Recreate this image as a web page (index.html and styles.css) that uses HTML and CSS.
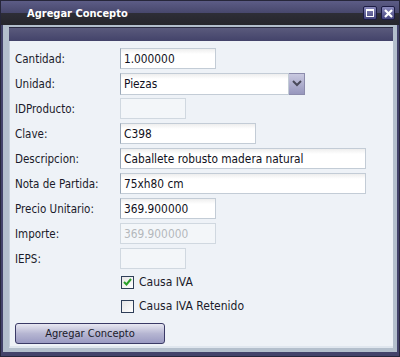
FILE: index.html
```html
<!DOCTYPE html>
<html lang="es">
<head>
    <meta charset="UTF-8">
    <title>Agregar Concepto</title>
    <link rel="stylesheet" href="styles.css">
</head>
<body>
    <div class="window">
        <div class="titlebar">
            <span class="title">Agregar Concepto</span>
            <div class="controls">
                <span class="ctl">
                    <svg width="8" height="8" viewBox="0 0 8 8"><rect x="0.5" y="0.5" width="7" height="7" fill="none" stroke="#fff"/><rect x="0" y="0" width="8" height="2" fill="#fff"/></svg>
                </span>
                <span class="ctl">
                    <svg width="9" height="9" viewBox="0 0 9 9"><path d="M1 1 L8 8 M8 1 L1 8" stroke="#fff" stroke-width="2.2"/></svg>
                </span>
            </div>
        </div>

        <div class="frame">
            <div class="band"></div>
            <div class="content">
                <!-- form rows -->
                <div class="form">
                    <label>Cantidad:</label>
                    <div><input class="w96" type="text" value="1.000000"></div>

                    <label>Unidad:</label>
                    <div class="combo">
                        <input class="w169" type="text" value="Piezas">
                        <span class="drop">
                            <svg width="10" height="7" viewBox="0 0 10 7"><path d="M1 1 L5 5 L9 1" fill="none" stroke="#4a4a5a" stroke-width="2"/></svg>
                        </span>
                    </div>

                    <label>IDProducto:</label>
                    <div><input class="w66 off" type="text" value=""></div>

                    <label>Clave:</label>
                    <div><input class="w136" type="text" value="C398"></div>

                    <label>Descripcion:</label>
                    <div><input class="w246" type="text" value="Caballete robusto madera natural"></div>

                    <label>Nota de Partida:</label>
                    <div><input class="w246" type="text" value="75xh80 cm"></div>

                    <label>Precio Unitario:</label>
                    <div><input class="w96" type="text" value="369.900000"></div>

                    <label>Importe:</label>
                    <div><input class="w96 off" type="text" value="369.900000"></div>

                    <label>IEPS:</label>
                    <div><input class="w66 off" type="text" value=""></div>
                </div>

                <div class="checks">
                    <div class="check"><span class="box">
                        <svg width="9" height="8" viewBox="0 0 9 8"><path d="M1 4 L3.5 6.5 L8 1" fill="none" stroke="#2aa02a" stroke-width="2"/></svg>
                    </span>Causa IVA</div>
                    <div class="check"><span class="box"></span>Causa IVA Retenido</div>
                </div>

                <button class="btn">Agregar Concepto</button>
            </div>
        </div>
    </div>
</body>
</html>
```

FILE: styles.css
```css
body {
    margin: 0;
    padding: 0;
    background-color: #ffffff;
    font-family: "DejaVu Sans Condensed", "DejaVu Sans", sans-serif;
    font-size: 11.5px;
    color: #1a1a2a;
}
.window {
    width: 400px;
    height: 357px;
    box-sizing: border-box;
    border: 1px solid #26263a;
    background-color: #43436a;
    padding: 0 2px 3px 2px;
}
.titlebar {
    height: 24px;
    margin: 0 -2px;
    padding: 0 4px 0 26px;
    display: flex;
    align-items: center;
    justify-content: space-between;
    background: linear-gradient(to bottom, #5c5c86 0%, #47476c 50%, #2d2d36 52%, #26262c 100%);
}
.title {
    color: #ffffff;
    font-weight: bold;
    font-size: 11px;
    margin-top: 1px;
}
.controls {
    display: flex;
    gap: 4px;
}
.ctl {
    width: 14px;
    height: 14px;
    box-sizing: border-box;
    border: 1px solid #1c1c44;
    border-radius: 2px;
    background: linear-gradient(to bottom, #8a8abc, #44447e);
    display: flex;
    align-items: center;
    justify-content: center;
}
.frame {
    height: 327px;
    box-sizing: border-box;
    background-color: #b3bfcc;
    padding: 2px 4px 4px 6px;
    display: flex;
    flex-direction: column;
}
.band {
    height: 13px;
    border-top: 1px solid #2c2c44;
    background: linear-gradient(to bottom, #5a5a7c, #43436a);
}
.content {
    flex: 1;
    background-color: #eef2f7;
    border-left: 1px solid #c6d0dc;
    border-bottom: 2px solid #dfe6ee;
    padding: 5px 0 0 5px;
}
.form {
    display: grid;
    grid-template-columns: 105px auto;
    grid-auto-rows: 25px;
    align-items: center;
}
.form label {
    font-size: 11.5px;
    color: #1a1a2a;
}
input[type="text"] {
    height: 21px;
    box-sizing: border-box;
    border: 1px solid #c3ccd6;
    border-left-color: #9aa8b8;
    background: linear-gradient(to bottom, #eeeeee 0px, #ffffff 5px);
    font-family: "DejaVu Sans Condensed", "DejaVu Sans", sans-serif;
    font-size: 11.8px;
    color: #101020;
    padding: 1px 3px 0 3px;
    margin: 0;
    display: block;
}
input.off {
    background: #f3f6f9;
    border-color: #d0d8e0;
    color: #b4b8bc;
}
.w66 { width: 66px; }
.w96 { width: 96px; }
.w136 { width: 136px; }
.w169 { width: 169px; height: 22px !important; }
.w246 { width: 246px; }
.combo {
    display: flex;
}
.drop {
    width: 16px;
    height: 22px;
    box-sizing: border-box;
    border: 1px solid #8c8cac;
    border-left: none;
    background: linear-gradient(to bottom, #c9c9e0, #9797bd);
    display: flex;
    align-items: center;
    justify-content: center;
}
.checks {
    margin-left: 106px;
    margin-top: -1px;
}
.check {
    height: 24px;
    display: flex;
    align-items: center;
    font-size: 12px;
}
.box {
    width: 13px;
    height: 13px;
    box-sizing: border-box;
    border: 1px solid #2e3e58;
    background: linear-gradient(to bottom right, #e6e6e6, #ffffff);
    margin-right: 5px;
    display: flex;
    align-items: center;
    justify-content: center;
}
.btn {
    margin-top: 5px;
    width: 150px;
    height: 21px;
    border: 1px solid #3a3a66;
    border-radius: 3px;
    background: linear-gradient(to bottom, #e8e8f2 0%, #b6b6d2 50%, #9a9ac2 100%);
    font-family: "DejaVu Sans Condensed", "DejaVu Sans", sans-serif;
    font-size: 11px;
    color: #1a1a2a;
    padding: 0;
    cursor: pointer;
}
```
